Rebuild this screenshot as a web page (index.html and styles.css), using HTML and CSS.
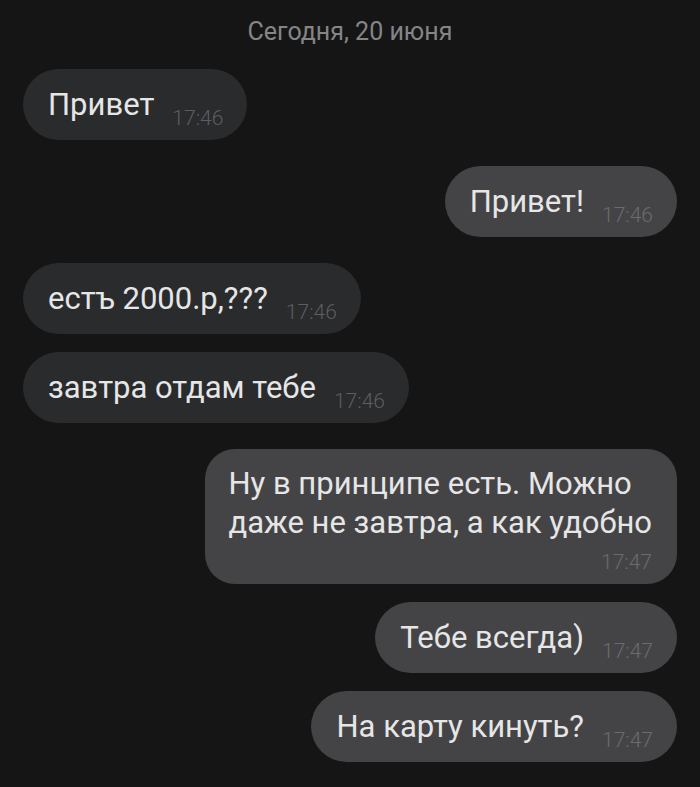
FILE: index.html
```html
<!DOCTYPE html>
<html lang="ru">
<head>
<meta charset="utf-8">
<title>Чат</title>
<link rel="stylesheet" href="styles.css">
</head>
<body>
<main class="chat">
  <div class="date">Сегодня, 20 июня</div>

  <div class="bubble in first">
    <span class="text">Привет</span><span class="time">17:46</span>
  </div>

  <div class="bubble out first">
    <span class="text">Привет!</span><span class="time">17:46</span>
  </div>

  <div class="bubble in first">
    <span class="text">естъ 2000.р,???</span><span class="time">17:46</span>
  </div>
  <div class="bubble in">
    <span class="text">завтра отдам тебе</span><span class="time">17:46</span>
  </div>

  <div class="bubble out first multi">
    <div class="text">Ну в принципе есть. Можно<br>даже не завтра, а как удобно</div>
    <div class="time">17:47</div>
  </div>
  <div class="bubble out">
    <span class="text">Тебе всегда)</span><span class="time">17:47</span>
  </div>
  <div class="bubble out">
    <span class="text">На карту кинуть?</span><span class="time">17:47</span>
  </div>
</main>
</body>
</html>
```

FILE: styles.css
```css
html, body {
  margin: 0;
  padding: 0;
  background: #151516;
}

body {
  font-family: Roboto, "Noto Sans", "Liberation Sans", sans-serif;
  color: #e6e6e6;
}

.chat {
  display: flex;
  flex-direction: column;
  align-items: flex-start;
  padding: 0 23px;
}

.date {
  align-self: center;
  margin-top: 17px;
  font-size: 25px;
  line-height: 30px;
  color: #858586;
}

.bubble {
  box-sizing: border-box;
  height: 71px;
  padding: 17px 24px 16px 25px;
  border-radius: 36px;
  background: #2a2b2d;
  white-space: nowrap;
  margin-top: 18px;
}

.bubble.first {
  margin-top: 26px;
}

.date + .bubble.first {
  margin-top: 22px;
}

.bubble.out {
  align-self: flex-end;
  background: #444446;
}

.text {
  font-size: 31px;
  line-height: 38px;
}

.time {
  display: inline-block;
  margin-left: 18px;
  font-size: 21px;
  line-height: 0;
  font-weight: 300;
  vertical-align: -10px;
  color: #5d5e60;
}

.bubble.out .time {
  color: #6b6b6d;
}

.bubble.multi {
  height: auto;
  padding: 15px 25px 12px 23px;
  border-radius: 30px;
}

.multi .text {
  line-height: 39px;
}

.multi .time {
  display: block;
  margin: 10px 0 0;
  line-height: 20px;
  text-align: right;
  vertical-align: baseline;
}
```
